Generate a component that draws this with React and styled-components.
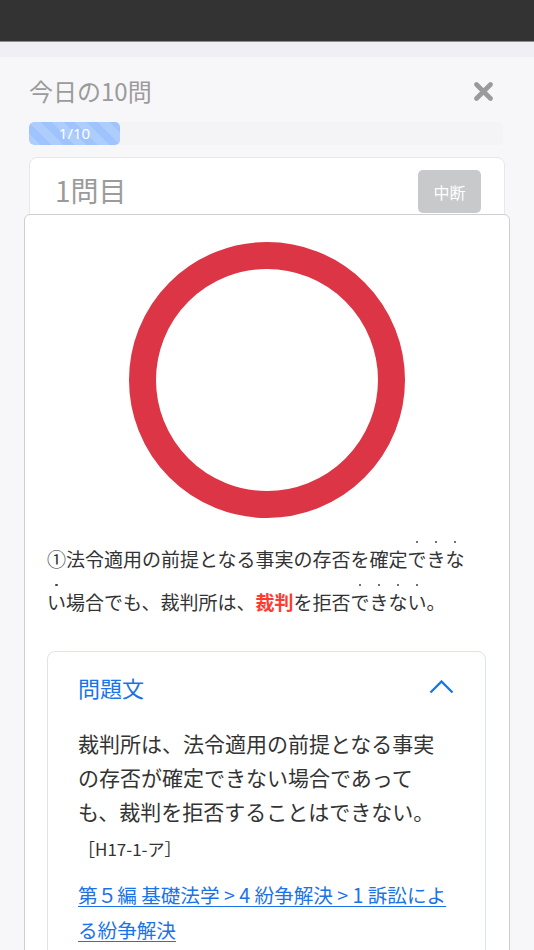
import React from "react";
import styled, { createGlobalStyle } from "styled-components";

const Global = createGlobalStyle`
  html, body { margin: 0; padding: 0; }
  body {
    background: #f7f7f9;
    font-family: "Noto Sans CJK JP", "Noto Sans", sans-serif;
    overflow: hidden;
    height: 950px;
  }
`;

const Page = styled.div`
  position: relative;
  height: 950px;
  overflow: hidden;
`;

const TopBar = styled.div`
  height: 41px;
  background: #333333;
  border-bottom: 1px solid #8a8a8a;
`;

const Strip = styled.div`
  height: 15px;
  background: #efeff4;
`;

const Sheet = styled.div`
  background: #f7f7f9;
  padding: 19px 29px 0 29px;
`;

const Header = styled.div`
  display: flex;
  align-items: center;
  justify-content: space-between;
  height: 30px;
`;

const Title = styled.h1`
  margin: 0;
  font-size: 24px;
  line-height: 30px;
  font-weight: 400;
  color: #9b9b9b;
`;

const CloseButton = styled.button`
  border: 0;
  background: none;
  padding: 0;
  margin-right: 12px;
  width: 19px;
  height: 19px;
  display: flex;
`;

const Track = styled.div`
  margin-top: 16px;
  height: 23px;
  width: 474px;
  border-radius: 5px;
  background: #f4f4f7;
  overflow: hidden;
`;

const Bar = styled.div`
  height: 100%;
  border-radius: 5px;
  background-color: #9fc4fd;
  background-image: linear-gradient(
    45deg,
    rgba(255, 255, 255, 0.15) 25%,
    transparent 25%,
    transparent 50%,
    rgba(255, 255, 255, 0.15) 50%,
    rgba(255, 255, 255, 0.15) 75%,
    transparent 75%,
    transparent
  );
  background-size: 23px 23px;
  color: #fff;
  font-size: 15px;
  line-height: 23px;
  text-align: center;
  font-family: "Noto Sans", "Open Sans", sans-serif;
`;

const QuestionCard = styled.div`
  margin-top: 12px;
  background: #fff;
  border: 1px solid #e8e8ea;
  border-radius: 8px;
  padding: 12px 23px 0 25px;
  height: 400px;
`;

const CardHead = styled.div`
  display: flex;
  align-items: center;
  justify-content: space-between;
`;

const QuestionNo = styled.div`
  font-size: 28px;
  color: #9b9b9b;
  line-height: 43px;
  margin-top: -3px;
`;

const PauseButton = styled.button`
  width: 63px;
  height: 43px;
  border: 0;
  border-radius: 5px;
  background: #c7c9cb;
  color: #fff;
  font-size: 16px;
  font-family: "Noto Sans CJK JP", sans-serif;
  padding: 0;
`;

const Modal = styled.div`
  position: absolute;
  top: 214px;
  left: 24px;
  width: 486px;
  height: 800px;
  background: #fff;
  border: 1px solid #cfcfd1;
  border-radius: 6px;
  padding: 27px 23px 0 22px;
  box-sizing: border-box;
`;

const Mark = styled.div`
  display: flex;
  justify-content: center;
`;

const Statement = styled.p`
  margin: 19px 0 0 0;
  font-size: 19px;
  line-height: 43px;
  color: #333;
  max-width: 432px;
`;

const Dot = styled.span`
  position: relative;
  &::before {
    content: "";
    position: absolute;
    left: 50%;
    top: -4px;
    width: 2.4px;
    height: 2.4px;
    margin-left: -1.2px;
    border-radius: 50%;
    background: #444;
  }
`;

const Key = styled.strong`
  color: #ff3b30;
  font-weight: 700;
`;

const Panel = styled.div`
  margin-top: 28px;
  border: 1px solid #dfe4ea;
  border-radius: 8px;
  padding: 18px 31px 20px 30px;
`;

const PanelHead = styled.div`
  display: flex;
  align-items: center;
  justify-content: space-between;
  height: 34px;
`;

const PanelTitle = styled.div`
  font-size: 22px;
  color: #1a73e8;
  line-height: 34px;
`;

const Body = styled.p`
  margin: 22px 0 0 0;
  font-size: 21px;
  line-height: 34px;
  color: #333;
  max-width: 362px;
`;

const Cite = styled.div`
  margin-top: 3px;
  font-size: 17px;
  line-height: 35px;
  color: #333;
`;

const Crumb = styled.a`
  display: block;
  margin-top: 11px;
  font-size: 19.6px;
  line-height: 35px;
  color: #1a73e8;
  text-decoration: underline;
  text-underline-offset: 3px;
`;

function Emph({ text }) {
  return (
    <>
      {Array.from(text).map((c, i) => (
        <Dot key={i}>{c}</Dot>
      ))}
    </>
  );
}

export default function App() {
  return (
    <Page>
      <Global />
      <TopBar />
      <Strip />
      <Sheet>
        <Header>
          <Title>今日の10問</Title>
          <CloseButton aria-label="閉じる">
            <svg width="19" height="19" viewBox="0 0 19 19">
              <path
                d="M2.5 2.5 L16.5 16.5 M16.5 2.5 L2.5 16.5"
                stroke="#9a9a9a"
                strokeWidth="4.6"
                strokeLinecap="round"
              />
            </svg>
          </CloseButton>
        </Header>
        <Track>
          <Bar style={{ width: "91px" }}>1/10</Bar>
        </Track>
        <QuestionCard>
          <CardHead>
            <QuestionNo>1問目</QuestionNo>
            <PauseButton>中断</PauseButton>
          </CardHead>
        </QuestionCard>
      </Sheet>

      <Modal>
        <Mark>
          <svg width="276" height="276" viewBox="0 0 276 276">
            <circle cx="138" cy="138" r="124.5" fill="none" stroke="#dc3545" strokeWidth="27" />
          </svg>
        </Mark>
        <Statement>
          ①法令適用の前提となる事実の存否を確定<Emph text="できない" />場合でも、裁判所は、
          <Key>裁判</Key>を拒否<Emph text="できない" />。
        </Statement>
        <Panel>
          <PanelHead>
            <PanelTitle>問題文</PanelTitle>
            <svg width="25" height="14" viewBox="0 0 25 14">
              <polyline
                points="1.5,12.5 12.5,1.5 23.5,12.5"
                fill="none"
                stroke="#1a73e8"
                strokeWidth="2.3"
              />
            </svg>
          </PanelHead>
          <Body>
            裁判所は、法令適用の前提となる事実の存否が確定できない場合であっても、裁判を拒否することはできない。
          </Body>
          <Cite>［H17-1-ア］</Cite>
          <Crumb href="#">第５編 基礎法学 &gt; 4 紛争解決 &gt; 1 訴訟による紛争解決</Crumb>
        </Panel>
      </Modal>
    </Page>
  );
}
